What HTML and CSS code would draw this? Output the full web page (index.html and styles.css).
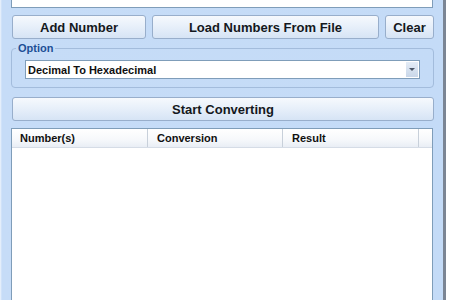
FILE: index.html
```html
<!DOCTYPE html>
<html lang="en">
<head>
    <meta charset="UTF-8">
    <title>Number Converter</title>
    <link rel="stylesheet" href="styles.css">
</head>
<body>
    <div class="window">
        <div class="number-input"></div>

        <div class="button-row">
            <button class="btn btn-add">Add Number</button>
            <button class="btn btn-load">Load Numbers From File</button>
            <button class="btn btn-clear">Clear</button>
        </div>

        <fieldset class="option-group">
            <legend>Option</legend>
            <div class="combo">
                <span class="combo-text">Decimal To Hexadecimal</span>
                <span class="combo-arrow"><span class="tri"></span></span>
            </div>
        </fieldset>

        <button class="btn btn-start">Start Converting</button>

        <div class="list">
            <div class="list-header">
                <div class="col col-num">Number(s)</div>
                <div class="col col-conv">Conversion</div>
                <div class="col col-res">Result</div>
                <div class="col col-fill"></div>
            </div>
            <div class="list-body"></div>
        </div>
    </div>
</body>
</html>
```

FILE: styles.css
```css
body {
    margin: 0;
    width: 450px;
    height: 300px;
    overflow: hidden;
    background-color: #ffffff;
    font-family: "Liberation Sans", Arial, sans-serif;
}
.window {
    width: 423px;
    height: 300px;
    padding: 0 9px 0 11px;
    background: linear-gradient(to right, #eef4fc 0, #c6dcf7 2px, #c4dbf7 100%);
    border-right: 3px solid #7b8594;
    display: flex;
    flex-direction: column;
    box-sizing: content-box;
}
.number-input {
    height: 7px;
    background-color: #ffffff;
    border: 1px solid #7f9db9;
    border-top: none;
    margin-right: 1px;
}
.button-row {
    display: flex;
    gap: 6px;
    margin-top: 7px;
    padding-left: 1px;
}
.btn {
    height: 24px;
    font-family: "Liberation Sans", Arial, sans-serif;
    font-size: 13px;
    font-weight: bold;
    color: #141820;
    background: linear-gradient(to bottom, #f6f9fd 0%, #e8f0fa 45%, #d6e4f5 100%);
    border: 1px solid #98aecb;
    border-radius: 3px;
    padding: 0;
    cursor: pointer;
}
.btn-add {
    width: 134px;
}
.btn-load {
    width: 227px;
}
.btn-clear {
    width: 49px;
}
.option-group {
    margin: 3px 0 0 0;
    padding: 6px 13px 8px 13px;
    border: 1px solid #a3bcdc;
    border-radius: 4px;
}
.option-group legend {
    margin-left: -9px;
    padding: 0 2px;
    font-size: 11px;
    line-height: 12px;
    font-weight: bold;
    color: #1d4f96;
}
.combo {
    height: 17px;
    display: flex;
    align-items: center;
    background-color: #ffffff;
    border: 1px solid #7f9db9;
}
.combo-text {
    flex-grow: 1;
    padding-left: 2px;
    font-size: 11px;
    font-weight: bold;
    color: #101010;
}
.combo-arrow {
    width: 12px;
    height: 15px;
    margin-right: 1px;
    background: linear-gradient(to bottom, #e4ecf6, #c9d7e9);
    display: flex;
    align-items: center;
    justify-content: center;
}
.tri {
    width: 0;
    height: 0;
    border-left: 3px solid transparent;
    border-right: 3px solid transparent;
    border-top: 3px solid #4a5566;
}
.btn-start {
    margin-top: 9px;
    margin-left: 1px;
    width: 422px;
}
.list {
    margin-top: 7px;
    flex-grow: 1;
    background-color: #ffffff;
    border: 1px solid #7f9db9;
    border-bottom: none;
    margin-right: 1px;
}
.list-header {
    display: flex;
    height: 18px;
    background: linear-gradient(to bottom, #ffffff 0%, #f6f8fb 60%, #e9eef5 100%);
    border-bottom: 1px solid #d5dce6;
}
.col {
    font-size: 11px;
    font-weight: bold;
    color: #101010;
    line-height: 18px;
    border-right: 1px solid #c8d0da;
    box-sizing: border-box;
}
.col-num {
    width: 136px;
    padding-left: 8px;
}
.col-conv {
    width: 135px;
    padding-left: 9px;
}
.col-res {
    width: 136px;
    padding-left: 9px;
}
.col-fill {
    flex-grow: 1;
    border-right: none;
}
```
